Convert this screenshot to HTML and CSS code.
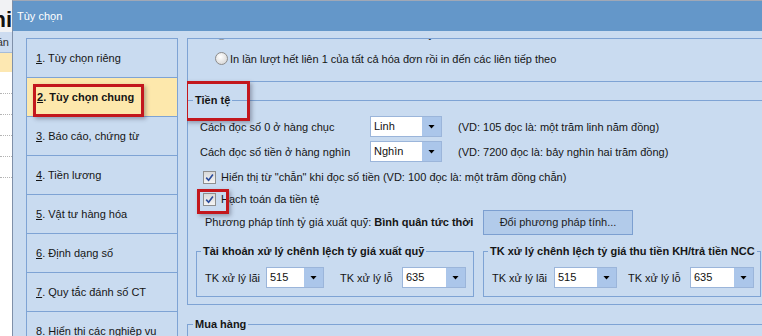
FILE: index.html
```html
<!DOCTYPE html>
<html lang="vi">
<head>
  <meta charset="UTF-8">
  <title>Tùy chọn</title>
  <link rel="stylesheet" href="styles.css">
</head>
<body>

  <!-- Màn hình chính phía sau hộp thoại -->
  <div class="app-behind">
    <div class="app-title"><span>hi</span></div>
    <div class="app-head"><span>ần</span></div>
    <div class="app-row current"></div>
    <div class="app-row"></div>
    <div class="app-row"></div>
    <div class="app-row"></div>
    <div class="app-row"></div>
    <div class="app-row"></div>
  </div>

  <div class="dialog">
    <div class="titlebar">Tùy chọn</div>

    <div class="dialog-body">
      <ul class="nav">
        <li><span><u>1</u>. Tùy chọn riêng</span></li>
        <li class="active"><span class="mark"><u>2</u>. Tùy chọn chung</span></li>
        <li><span><u>3</u>. Báo cáo, chứng từ</span></li>
        <li><span><u>4</u>. Tiền lương</span></li>
        <li><span><u>5</u>. Vật tư hàng hóa</span></li>
        <li><span><u>6</u>. Định dạng số</span></li>
        <li><span><u>7</u>. Quy tắc đánh số CT</span></li>
        <li><span><u>8</u>. Hiển thị các nghiệp vụ</span></li>
      </ul>

      <div class="content">
        <div class="print-group">
          <div class="radio-row first"><span class="radio"></span>In hết tất cả các liên của mỗi hóa đơn này rồi in đến hóa đơn khác</div>
          <div class="radio-row second"><span class="radio"></span>In lần lượt hết liên 1 của tất cả hóa đơn rồi in đến các liên tiếp theo</div>
        </div>

        <fieldset class="group">
          <legend class="mark">Tiền tệ</legend>

          <div class="sel-row first">
            <span class="sel-label">Cách đọc số 0 ở hàng chục</span>
            <div class="select wide"><span class="value">Linh</span><span class="drop"></span></div>
            <span class="note">(VD: 105 đọc là: một trăm linh năm đồng)</span>
          </div>
          <div class="sel-row">
            <span class="sel-label">Cách đọc số tiền ở hàng nghìn</span>
            <div class="select wide"><span class="value">Nghìn</span><span class="drop"></span></div>
            <span class="note">(VD: 7200 đọc là: bảy nghìn hai trăm đồng)</span>
          </div>

          <div class="check-row first">
            <span class="checkbox"><svg viewBox="0 0 11 11" width="11" height="11"><path d="M2.2 5.6 L4.6 8.2 L8.9 2.4" fill="none" stroke="#2a4b9c" stroke-width="1.6"/></svg></span>
            Hiển thị từ &quot;chẵn&quot; khi đọc số tiền (VD: 100 đọc là: một trăm đồng chẵn)
          </div>
          <div class="check-row">
            <span class="checkbox mark"><svg viewBox="0 0 11 11" width="11" height="11"><path d="M2.2 5.6 L4.6 8.2 L8.9 2.4" fill="none" stroke="#2a4b9c" stroke-width="1.6"/></svg></span>
            Hạch toán đa tiền tệ
          </div>

          <div class="method-row">
            <span class="method-text">Phương pháp tính tỷ giá xuất quỹ: <b>Bình quân tức thời</b></span>
            <button class="btn">Đổi phương pháp tính...</button>
          </div>

          <div class="subgroups">
            <fieldset class="sub">
              <legend>Tài khoản xử lý chênh lệch tỷ giá xuất quỹ</legend>
              <div class="acct-row">
                <span class="acct-label narrow">TK xử lý lãi</span>
                <div class="select s58"><span class="value">515</span><span class="drop"></span></div>
                <span class="acct-label gap16">TK xử lý lỗ</span>
                <div class="select s64"><span class="value">635</span><span class="drop"></span></div>
              </div>
            </fieldset>
            <fieldset class="sub">
              <legend>TK xử lý chênh lệch tỷ giá thu tiền KH/trả tiền NCC</legend>
              <div class="acct-row">
                <span class="acct-label">TK xử lý lãi</span>
                <div class="select s63"><span class="value">515</span><span class="drop"></span></div>
                <span class="acct-label gap11">TK xử lý lỗ</span>
                <div class="select s64"><span class="value">635</span><span class="drop"></span></div>
              </div>
            </fieldset>
          </div>
        </fieldset>

        <fieldset class="group next">
          <legend>Mua hàng</legend>
          <div class="spacer"></div>
        </fieldset>
      </div>
    </div>
  </div>

</body>
</html>
```

FILE: styles.css
```css
* {
  box-sizing: border-box;
}

body {
  margin: 0;
  width: 762px;
  height: 336px;
  overflow: hidden;
  display: flex;
  font-family: "Liberation Sans", Arial, sans-serif;
  font-size: 11px;
  color: #151515;
  background: #fff;
}

/* ---- app behind the dialog ---- */
.app-behind {
  width: 12px;
  flex-shrink: 0;
  overflow: hidden;
  background: #fff;
}

.app-title {
  height: 32px;
  display: flex;
  justify-content: flex-end;
  background: #f1f2f4;
  font-size: 22px;
  font-weight: bold;
  line-height: 39px;
  white-space: nowrap;
  overflow: hidden;
  color: #111;
}

.app-head {
  height: 21px;
  display: flex;
  justify-content: flex-end;
  background: #cddcf0;
  border-bottom: 1px solid #a6bcd9;
  line-height: 20px;
  padding-right: 3px;
  white-space: nowrap;
  overflow: hidden;
  color: #333;
}

.app-title span,
.app-head span {
  flex-shrink: 0;
}

.app-row {
  height: 21px;
  border-bottom: 1px dotted #b4b4b4;
}

.app-row.current {
  height: 20px;
  background: #fde8b2;
  border-bottom: 1px solid #fff;
}

/* ---- dialog ---- */
.dialog {
  flex: 1;
  min-width: 0;
  display: flex;
  flex-direction: column;
  border-left: 1px solid #7f90a9;
  border-top: 1px solid #a0a8b6;
  background: #c9dbf0;
  overflow: hidden;
}

.titlebar {
  height: 30px;
  flex-shrink: 0;
  background: #6497c9;
  color: #fff;
  line-height: 30px;
  padding-left: 4px;
}

.dialog-body {
  flex: 1;
  min-height: 0;
  display: flex;
  padding: 7px 0 0 13px;
  overflow: hidden;
}

/* ---- left menu ---- */
.nav {
  list-style: none;
  margin: 0;
  padding: 0;
  width: 152px;
  flex-shrink: 0;
  border: 1px solid #7ea3d4;
  border-bottom: none;
}

.nav li {
  height: 39px;
  display: flex;
  align-items: center;
  padding-left: 9px;
  border-bottom: 1px solid #7ea3d4;
  white-space: nowrap;
}

.nav li.active {
  background: #fde8ac;
  font-weight: bold;
  padding-left: 10px;
}

.mark {
  position: relative;
}

.mark::after {
  content: "";
  position: absolute;
  border: 3px solid #c3171d;
  box-shadow: 2px 2px 4px rgba(40, 40, 60, 0.35);
  pointer-events: none;
}

.nav .mark::after {
  left: -4px;
  top: -7px;
  width: 105px;
  height: 27px;
}

/* ---- right panel ---- */
.content {
  width: 600px;
  flex-shrink: 0;
  margin-left: 9px;
  border-top: 1px solid #7ea3d4;
  overflow: hidden;
}

.print-group {
  height: 43px;
  border: 1px solid #7ea3d4;
  border-top: none;
  overflow: hidden;
}

.radio-row {
  height: 23px;
  display: flex;
  align-items: center;
  padding-left: 27px;
  white-space: nowrap;
}

.radio-row.first {
  margin-top: -17px;
}

.radio-row.second {
  margin-top: 2px;
}

.radio {
  width: 13px;
  height: 13px;
  margin-right: 2px;
  border: 1px solid #8c8c8c;
  border-radius: 50%;
  background: radial-gradient(circle at 40% 35%, #ffffff, #cfcfcf);
  flex-shrink: 0;
}

fieldset {
  margin: 0;
  padding: 0;
  min-width: 0;
  border: 1px solid #7ea3d4;
}

legend {
  font-weight: bold;
  line-height: 14px;
  padding: 0 2px;
  white-space: nowrap;
}

.group {
  margin-top: 11px;
  padding-bottom: 7px;
}

.group legend {
  margin-left: 5px;
}

.group legend.mark::after {
  left: -8px;
  top: -12px;
  width: 59px;
  height: 34px;
}

.group.next {
  margin-top: 12px;
}

.spacer {
  height: 40px;
}

.sel-row {
  height: 21px;
  display: flex;
  align-items: center;
  margin-top: 4px;
  padding-left: 12px;
  white-space: nowrap;
}

.sel-row.first {
  margin-top: 9px;
}

.sel-label {
  width: 170px;
}

.note {
  margin-left: 16px;
}

.select {
  display: flex;
  height: 21px;
  background: #fff;
  border: 1px solid #9bb5da;
}

.select.wide { width: 72px; }
.select.s58 { width: 58px; }
.select.s63 { width: 63px; }
.select.s64 { width: 64px; }

.select .value {
  flex: 1;
  padding-left: 3px;
  line-height: 19px;
  color: #111;
}

.select .drop {
  width: 19px;
  background: #abc6ea;
  display: flex;
  align-items: center;
  justify-content: center;
}

.select .drop::after {
  content: "";
  width: 7px;
  height: 4px;
  background: #000;
  clip-path: polygon(0 0, 100% 0, 50% 100%);
}

.check-row {
  height: 22px;
  display: flex;
  align-items: center;
  padding-left: 15px;
  white-space: nowrap;
}

.check-row.first {
  margin-top: 4px;
}

.checkbox {
  width: 13px;
  height: 13px;
  margin-right: 5px;
  border: 1px solid #8e8e8e;
  background: linear-gradient(#d9d9d9, #f4f4f4);
  display: flex;
  align-items: center;
  justify-content: center;
  flex-shrink: 0;
}

.checkbox.mark::after {
  left: -7px;
  top: -5px;
  width: 26px;
  height: 19px;
}

.method-row {
  height: 24px;
  display: flex;
  align-items: center;
  padding-left: 17px;
  white-space: nowrap;
}

.method-text {
  width: 278px;
}

.btn {
  width: 150px;
  height: 25px;
  background: #b2cbea;
  border: 1px solid #7c9fd0;
  font-family: inherit;
  font-size: 11px;
  color: #1c1c1c;
  padding: 0;
}

.subgroups {
  display: flex;
  gap: 9px;
  margin-top: 10px;
  padding-left: 8px;
}

.sub {
  width: 278px;
  padding-bottom: 8px;
}

.sub legend {
  margin-left: 4px;
}

.acct-row {
  height: 21px;
  display: flex;
  align-items: center;
  margin-top: 9px;
  padding-left: 8px;
  white-space: nowrap;
}

.acct-label {
  width: 62px;
}

.acct-label.narrow { width: 61px; }
.acct-label.gap16 { margin-left: 16px; }
.acct-label.gap11 { margin-left: 11px; }
```
